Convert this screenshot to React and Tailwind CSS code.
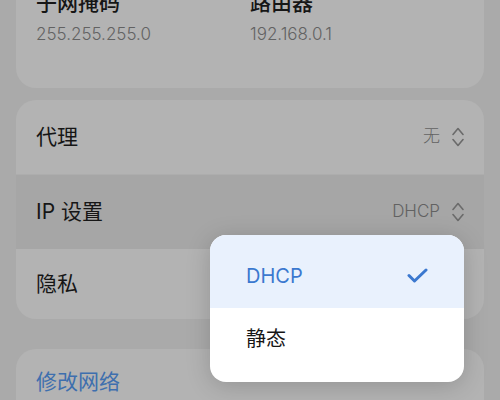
const font = { fontFamily: 'Inter, "Noto Sans CJK SC", "Noto Sans", sans-serif' }

function UpDown() {
  return (
    <svg width="12" height="20" viewBox="0 0 12 20" fill="none" stroke="#6b6b6b" strokeWidth="1.6" strokeLinecap="round" strokeLinejoin="round">
      <path d="M1 7.5 L6 1.5 L11 7.5" />
      <path d="M1 12.5 L6 18.5 L11 12.5" />
    </svg>
  )
}

function Row({ label, value, className = '', h = 'h-[75px]' }) {
  return (
    <div className={`flex items-center justify-between pl-5 pr-5 ${h} ${className}`}>
      <span className="text-[21px] text-[#161616]">{label}</span>
      {value && (
        <div className="flex items-center gap-3">
          <span className="text-[17px] font-light text-[#626262]">{value}</span>
          <UpDown />
        </div>
      )}
    </div>
  )
}

export default function App() {
  return (
    <div className="relative w-[500px] h-[400px] overflow-hidden bg-[#aaaaaa]" style={font}>
      <div className="mx-4 h-[88px] rounded-b-[20px] bg-[#b3b3b3]">
        <div className="grid grid-cols-[214px_1fr] px-5 -translate-y-[10px]">
          <div className="flex flex-col gap-[6px]">
            <span className="text-[21px] leading-[26px] font-medium text-[#161616]">子网掩码</span>
            <span className="text-[17px] leading-[24px] font-light text-[#626262]">255.255.255.0</span>
          </div>
          <div className="flex flex-col gap-[6px]">
            <span className="text-[21px] leading-[26px] font-medium text-[#161616]">路由器</span>
            <span className="text-[17px] leading-[24px] font-light text-[#626262]">192.168.0.1</span>
          </div>
        </div>
      </div>

      <div className="mx-4 mt-3 rounded-[20px] bg-[#b3b3b3] overflow-hidden">
        <Row label="代理" value="无" h="h-[75px]" className="border-b border-[#adadad]" />
        <Row label="IP 设置" value="DHCP" h="h-[74px]" className="bg-[#a6a6a6]" />
        <Row label="隐私" h="h-[70px]" />
      </div>

      <div className="mx-4 mt-[30px] h-[60px] rounded-t-[20px] bg-[#b3b3b3] pl-5 pt-[19px]">
        <span className="text-[21px] leading-[28px] text-[#3e6fae]">修改网络</span>
      </div>

      <div className="absolute left-[210px] top-[235px] w-[254px] h-[147px] rounded-[16px] bg-white overflow-hidden shadow-[0_4px_24px_rgba(0,0,0,0.18)]">
        <div className="flex items-center justify-between h-[73px] pt-[8px] pl-9 pr-9 bg-[#e9f1fd]">
          <span className="text-[20px] text-[#3b78cf]">DHCP</span>
          <svg width="21" height="15" viewBox="0 0 21 15" fill="none" stroke="#3b78cf" strokeWidth="3" strokeLinecap="round" strokeLinejoin="round">
            <path d="M2 7.5 L7.5 13 L19 2" />
          </svg>
        </div>
        <div className="flex items-center h-[62px] pl-9">
          <span className="text-[20px] text-[#161616]">静态</span>
        </div>
      </div>
    </div>
  )
}
